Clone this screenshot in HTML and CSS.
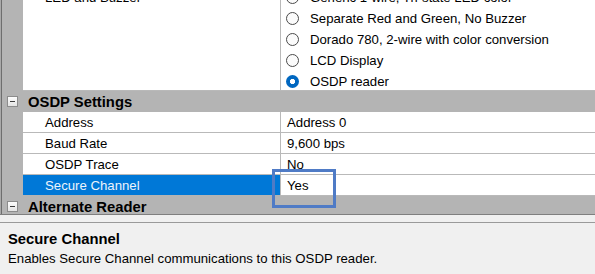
FILE: index.html
```html
<!DOCTYPE html>
<html lang="en">
<head>
  <meta charset="UTF-8" />
  <title>Reader Properties</title>
  <link rel="stylesheet" href="styles.css">
</head>
<body>

  <div class="grid">
    <div class="rows">

      <div class="row multi">
        <div class="gutter"></div>
        <div class="name">LED and Buzzer</div>
        <div class="value">
          <ul class="radios">
            <li><span class="radio"></span>Generic 1-wire, Tri-state LED color</li>
            <li><span class="radio"></span>Separate Red and Green, No Buzzer</li>
            <li><span class="radio"></span>Dorado 780, 2-wire with color conversion</li>
            <li><span class="radio"></span>LCD Display</li>
            <li><span class="radio checked"></span>OSDP reader</li>
          </ul>
        </div>
      </div>

      <div class="row category">
        <div class="gutter"><span class="toggle"></span></div>
        <div class="cat-name">OSDP Settings</div>
      </div>
      <div class="row">
        <div class="gutter"></div>
        <div class="name">Address</div>
        <div class="value">Address 0</div>
      </div>
      <div class="row">
        <div class="gutter"></div>
        <div class="name">Baud Rate</div>
        <div class="value">9,600 bps</div>
      </div>
      <div class="row">
        <div class="gutter"></div>
        <div class="name">OSDP Trace</div>
        <div class="value">No</div>
      </div>
      <div class="row selected">
        <div class="gutter"></div>
        <div class="name">Secure Channel</div>
        <div class="value">Yes</div>
      </div>

      <div class="row category">
        <div class="gutter"><span class="toggle"></span></div>
        <div class="cat-name">Alternate Reader</div>
      </div>

    </div>
  </div>

  <div class="splitter"></div>

  <div class="help">
    <div class="help-title">Secure Channel</div>
    <div class="help-text">Enables Secure Channel communications to this OSDP reader.</div>
  </div>

  <div class="callout"></div>

</body>
</html>
```

FILE: styles.css
```css
body {
  margin: 0;
  background: #f0f0f0;
  font-family: "Liberation Sans", Arial, sans-serif;
  font-size: 13.2px;
  color: #000;
  position: relative;
  height: 274px;
  overflow: hidden;
}

/* property grid */
.grid {
  height: 214px;
  overflow: hidden;
  background: #b4b4b4;
  border-left: 1px solid #a9a9a9;
}
.rows {
  margin-top: -13px;
  border-left: 1px solid #6e6e6e;
}
.row {
  display: grid;
  grid-template-columns: 21px 258px 1fr;
}
.gutter { background: #b4b4b4; }
.name {
  background: #fff;
  height: 18px;
  padding: 2px 0 0 22px;
  line-height: 18px;
  border-right: 1px solid #b9b9b9;
  border-bottom: 1px solid #b9b9b9;
  white-space: nowrap;
}
.value {
  background: #fff;
  height: 18px;
  padding: 2px 0 0 6px;
  line-height: 18px;
  border-bottom: 1px solid #b9b9b9;
  white-space: nowrap;
}

.row.multi .name,
.row.multi .value {
  height: 103px;
  padding-top: 0;
  line-height: 21px;
  overflow: hidden;
}
.row.multi .value { padding-left: 5px; }

.radios { list-style: none; margin: 0; padding: 0; }
.radios li {
  height: 21px;
  display: flex;
  align-items: center;
}
.radio {
  width: 11px;
  height: 11px;
  border: 1px solid #4a4a4a;
  border-radius: 50%;
  background: #fbfbfb;
  margin-right: 11px;
  flex-shrink: 0;
}
.radio.checked {
  width: 13px;
  height: 13px;
  border: none;
  background: radial-gradient(circle, #fff 0 2.4px, #0067c0 2.9px);
}

.row.category {
  background: #b4b4b4;
  height: 21px;
  grid-template-columns: 21px 1fr;
}
.cat-name {
  padding: 2px 0 0 5px;
  line-height: 18px;
  font-weight: bold;
  font-size: 14.8px;
}
.toggle {
  display: block;
  width: 9px;
  height: 9px;
  margin: 5px 0 0 5px;
  border: 1px solid #8c8c8c;
  background: linear-gradient(#fdfdfd, #e4e4e4);
  position: relative;
}
.toggle::after {
  content: "";
  position: absolute;
  left: 2px;
  top: 4px;
  width: 5px;
  height: 1px;
  background: #3c3c3c;
}

.row.selected .name {
  background: #0078d7;
  color: #eef4fb;
  border-bottom-color: #b4b4b4;
}

/* splitter and description */
.splitter {
  height: 7px;
  border-top: 1px solid #7f7f7f;
  border-bottom: 1px solid #9a9a9a;
  background: #f0f0f0;
}
.help { padding: 7px 8px 0; }
.help-title {
  font-weight: bold;
  font-size: 14.8px;
  line-height: 19px;
}
.help-text { line-height: 19px; }

/* annotation box */
.callout {
  position: absolute;
  left: 272px;
  top: 169px;
  width: 58px;
  height: 33px;
  border: 3px solid #4f7bc6;
}
```
